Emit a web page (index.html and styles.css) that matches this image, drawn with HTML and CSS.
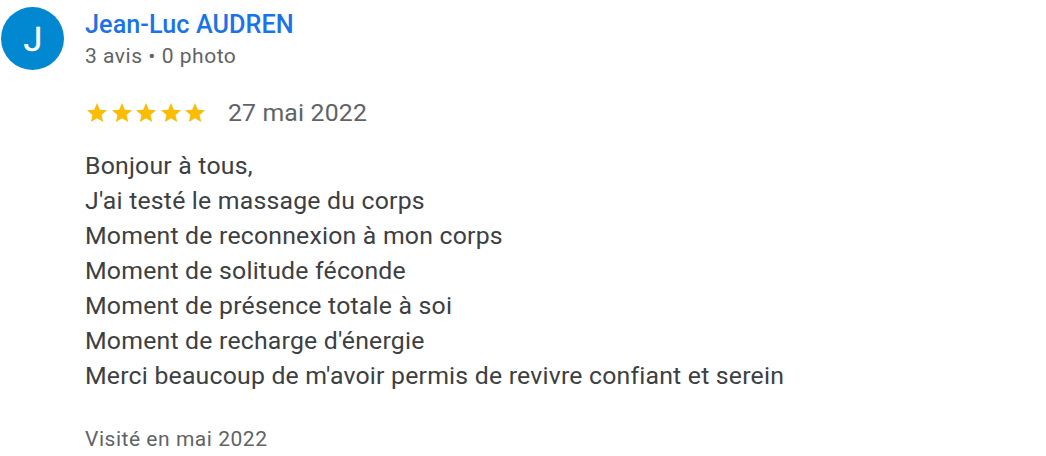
FILE: index.html
```html
<!DOCTYPE html>
<html lang="fr">
<head>
<meta charset="utf-8">
<title>Avis</title>
<link rel="stylesheet" href="styles.css">
</head>
<body>
<article class="review">
  <div class="avatar">J</div>
  <div class="content">
    <div class="name">Jean-Luc AUDREN</div>
    <div class="meta">3 avis • 0 photo</div>
    <div class="rating">
      <div class="stars">
        <svg class="star" viewBox="2 2 20 19"><path d="M12 17.27 18.18 21l-1.64-7.03L22 9.24l-7.19-.61L12 2 9.19 8.63 2 9.24l5.46 4.73L5.82 21z"/></svg>
        <svg class="star" viewBox="2 2 20 19"><path d="M12 17.27 18.18 21l-1.64-7.03L22 9.24l-7.19-.61L12 2 9.19 8.63 2 9.24l5.46 4.73L5.82 21z"/></svg>
        <svg class="star" viewBox="2 2 20 19"><path d="M12 17.27 18.18 21l-1.64-7.03L22 9.24l-7.19-.61L12 2 9.19 8.63 2 9.24l5.46 4.73L5.82 21z"/></svg>
        <svg class="star" viewBox="2 2 20 19"><path d="M12 17.27 18.18 21l-1.64-7.03L22 9.24l-7.19-.61L12 2 9.19 8.63 2 9.24l5.46 4.73L5.82 21z"/></svg>
        <svg class="star" viewBox="2 2 20 19"><path d="M12 17.27 18.18 21l-1.64-7.03L22 9.24l-7.19-.61L12 2 9.19 8.63 2 9.24l5.46 4.73L5.82 21z"/></svg>
      </div>
      <span class="date">27 mai 2022</span>
    </div>
    <div class="text">Bonjour à tous,<br>J'ai testé le massage du corps<br>Moment de reconnexion à mon corps<br>Moment de solitude féconde<br>Moment de présence totale à soi<br>Moment de recharge d'énergie<br>Merci beaucoup de m'avoir permis de revivre confiant et serein</div>
    <div class="visited">Visité en mai 2022</div>
  </div>
</article>
</body>
</html>
```

FILE: styles.css
```css
body { margin: 0; background: #fff; font-family: Roboto, sans-serif; color: #3c4043; }
.review { display: flex; gap: 21px; padding: 7px 0 0 1px; }
.avatar { width: 63px; height: 63px; flex: none; border-radius: 50%; background: #0288d1; color: #fff; font-size: 34px; line-height: 65px; text-align: center; text-indent: 1px; -webkit-text-stroke: .4px #fff; }
.content { white-space: nowrap; }
.name { font-size: 25.2px; line-height: 35px; font-weight: 500; letter-spacing: .07px; color: #1a73e8; }
.meta { font-size: 21px; line-height: 28px; letter-spacing: .53px; color: #5f6368; }
.rating { display: flex; align-items: center; gap: 22.5px; height: 35px; margin-top: 25px; }
.stars { display: flex; gap: 4.6px; padding-left: 2px; }
.star { width: 20px; height: 19px; fill: #fbbc04; }
.date { font-size: 24.8px; line-height: 35px; letter-spacing: .18px; color: #5f6368; }
.text { margin-top: 18px; font-size: 24.8px; line-height: 35px; letter-spacing: .21px; }
.visited { margin-top: 32px; font-size: 21px; line-height: 28px; letter-spacing: .53px; color: #5f6368; }
```
